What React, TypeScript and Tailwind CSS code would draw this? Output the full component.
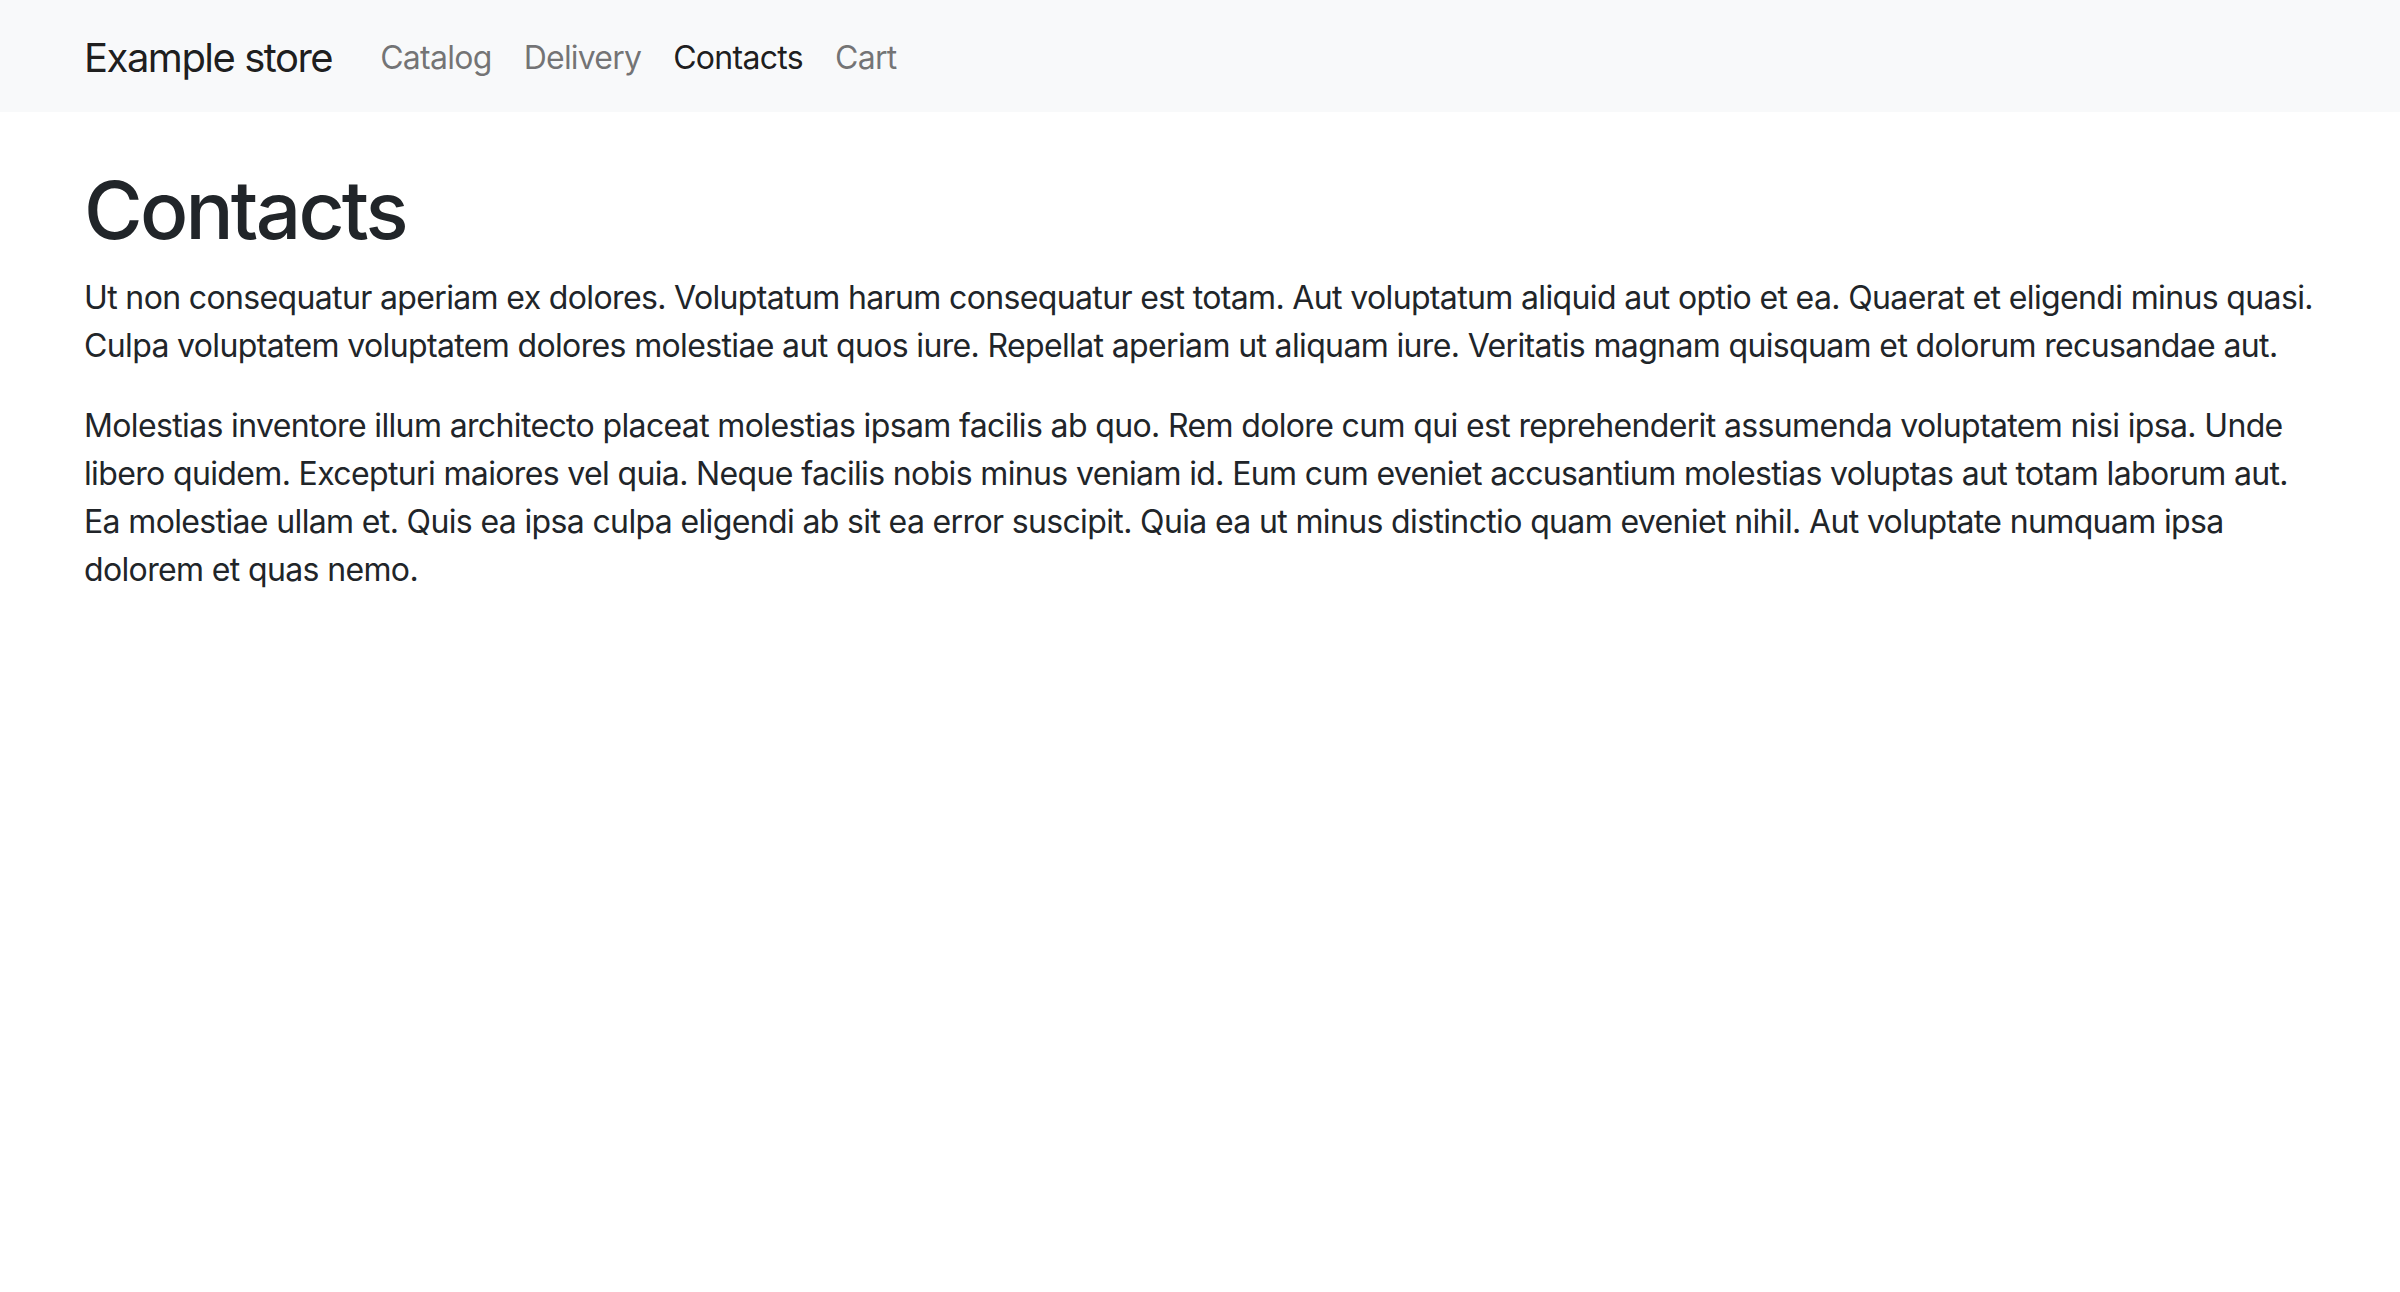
import React from "react";

const p1 = [
  "Ut non consequatur aperiam ex dolores. Voluptatum harum consequatur est totam. Aut voluptatum aliquid aut optio et ea. Quaerat et eligendi minus quasi.",
  "Culpa voluptatem voluptatem dolores molestiae aut quos iure. Repellat aperiam ut aliquam iure. Veritatis magnam quisquam et dolorum recusandae aut.",
];
const p2 = [
  "Molestias inventore illum architecto placeat molestias ipsam facilis ab quo. Rem dolore cum qui est reprehenderit assumenda voluptatem nisi ipsa. Unde",
  "libero quidem. Excepturi maiores vel quia. Neque facilis nobis minus veniam id. Eum cum eveniet accusantium molestias voluptas aut totam laborum aut.",
  "Ea molestiae ullam et. Quis ea ipsa culpa eligendi ab sit ea error suscipit. Quia ea ut minus distinctio quam eveniet nihil. Aut voluptate numquam ipsa",
  "dolorem et quas nemo.",
];

export default function App() {
  return (
    <div className="min-h-[1292px] bg-white text-[#212529] [font-family:Inter,'Noto_Sans',sans-serif]">
      <nav className="h-[112px] bg-[#f8f9fa] flex items-center px-[84px] pt-[3px]">
        <span className="text-[40px] leading-[60px] text-black/90 mr-[32px] tracking-[-1.5px]">Example store</span>
        <div className="flex items-center">
          <span className="text-[32px] leading-[48px] px-[16px] text-black/55 tracking-[-0.7px]">Catalog</span>
          <span className="text-[32px] leading-[48px] px-[16px] text-black/55 tracking-[-0.8px]">Delivery</span>
          <span className="text-[32px] leading-[48px] px-[16px] text-black/90 tracking-[-0.7px]">Contacts</span>
          <span className="text-[32px] leading-[48px] px-[16px] text-black/55 tracking-[-0.7px]">Cart</span>
        </div>
      </nav>
      <main className="px-[84px] pt-[50px]">
        <h1 className="text-[80px] leading-[96px] font-medium mb-[16px] tracking-[-2.75px]">Contacts</h1>
        <p className="text-[32px] leading-[48px] mb-[32px] tracking-[-0.64px]">
          {p1.map((l, i) => (
            <span key={i} className="block whitespace-nowrap">{l}</span>
          ))}
        </p>
        <p className="text-[32px] leading-[48px] mb-[32px] tracking-[-0.64px]">
          {p2.map((l, i) => (
            <span key={i} className="block whitespace-nowrap">{l}</span>
          ))}
        </p>
      </main>
    </div>
  );
}
